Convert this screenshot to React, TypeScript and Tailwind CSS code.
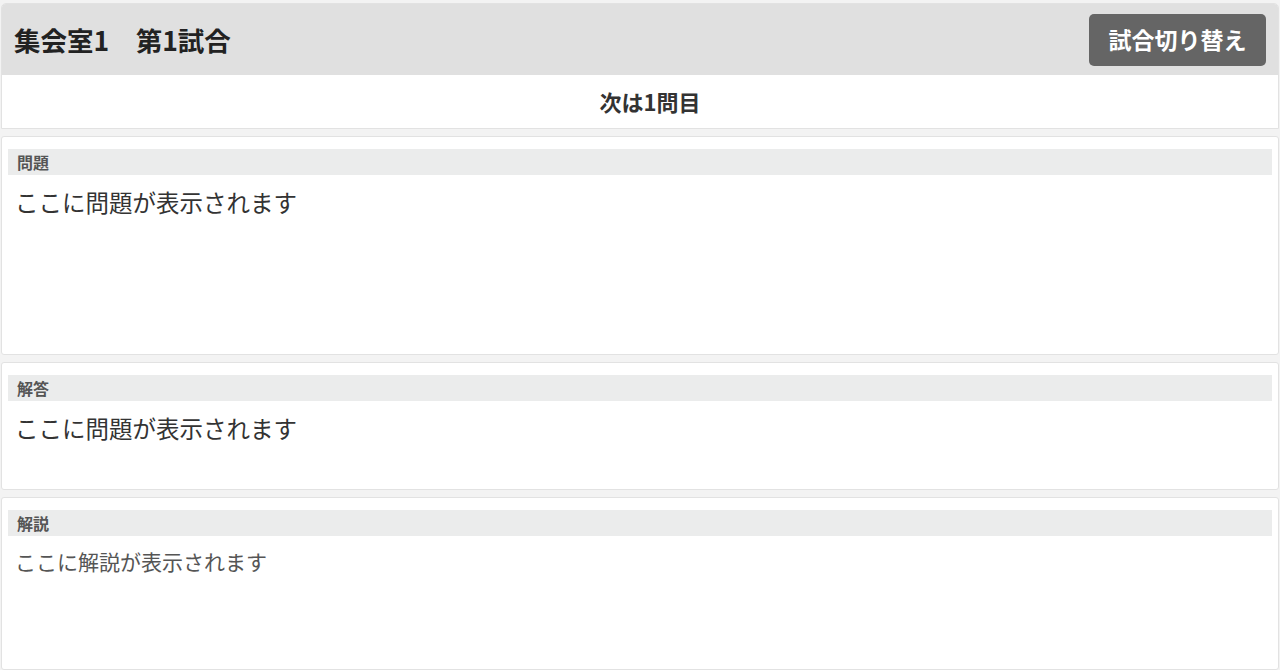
import React from "react";

const font = { fontFamily: '"Noto Sans CJK JP", "Noto Sans", sans-serif' };

function Section({ label, text, h, small }: { label: string; text: string; h: string; small?: boolean }) {
  return (
    <div className={`bg-white border border-[#e2e2e2] rounded-[3px] px-[6px] pt-[12px] ${h}`}>
      <div className="bg-[#ebecec] h-[26px] flex items-center px-[9px] text-[16px] font-bold text-[#555]">
        {label}
      </div>
      <div
        className={
          small
            ? "px-[7px] pt-[10px] text-[21px] leading-[30px] text-[#555]"
            : "px-[7px] pt-[10px] text-[23.5px] leading-[34px] text-[#333]"
        }
      >
        {text}
      </div>
    </div>
  );
}

export default function App() {
  return (
    <div style={font} className="w-[1280px] h-[670px] bg-[#f3f3f3] px-[1px] pt-[3px] flex flex-col gap-[7px] overflow-hidden">
      <div className="border border-[#e2e2e2] rounded-t-[5px] overflow-hidden bg-white">
        <div className="h-[71px] bg-[#e0e0e0] flex items-center justify-between pl-[12px] pr-[12px]">
          <div className="text-[26.5px] font-bold text-[#222] whitespace-pre">集会室1　第1試合</div>
          <button className="h-[52px] w-[177px] bg-[#656565] rounded-[5px] text-white text-[23px] font-bold">
            試合切り替え
          </button>
        </div>
        <div className="h-[53px] flex items-center justify-center pl-[20px] text-[22px] font-bold text-[#333]">
          次は1問目
        </div>
      </div>
      <Section label="問題" text="ここに問題が表示されます" h="h-[219px]" />
      <Section label="解答" text="ここに問題が表示されます" h="h-[128px]" />
      <Section label="解説" text="ここに解説が表示されます" h="h-[173px]" small />
    </div>
  );
}
